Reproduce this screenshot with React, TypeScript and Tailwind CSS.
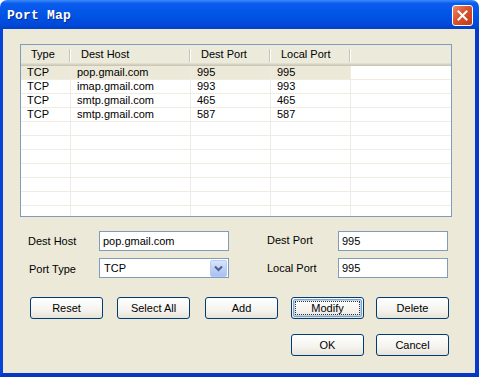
import React from "react";

const rows = [
  ["TCP", "pop.gmail.com", "995", "995"],
  ["TCP", "imap.gmail.com", "993", "993"],
  ["TCP", "smtp.gmail.com", "465", "465"],
  ["TCP", "smtp.gmail.com", "587", "587"],
  ["", "", "", ""],
  ["", "", "", ""],
  ["", "", "", ""],
  ["", "", "", ""],
  ["", "", "", ""],
  ["", "", "", ""],
  ["", "", "", ""],
];

const widths = ["w-[50px]", "w-[120px]", "w-[80px]", "w-[80px]"];

function XpButton({
  label,
  focused,
  className,
}: {
  label: string;
  focused?: boolean;
  className?: string;
}) {
  return (
    <div
      className={
        "flex h-[22px] w-[73px] items-center justify-center rounded-[3px] border border-[#003C74] bg-[linear-gradient(to_bottom,#FFFFFF_0%,#F4F3EE_60%,#E6E3D8_100%)] p-[1px] " +
        (className ?? "")
      }
    >
      <div
        className={
          "flex h-full w-full items-center justify-center rounded-[2px] " +
          (focused
            ? "border border-[#7DA2CE] shadow-[inset_0_0_0_1px_#BCD3F1] outline outline-1 outline-dotted outline-offset-[-3px] outline-[#333]"
            : "")
        }
      >
        <span className="leading-[13px]">{label}</span>
      </div>
    </div>
  );
}

function TextBox({ value, className }: { value: string; className: string }) {
  return (
    <div
      className={
        "flex h-[20px] items-center border border-[#7F9DB9] bg-white pl-[3px] " +
        className
      }
    >
      {value}
    </div>
  );
}

export default function App() {
  return (
    <div
      className="flex h-[377px] w-[479px] flex-col overflow-hidden text-[11px] text-black"
      style={{ fontFamily: '"Liberation Sans", Arial, sans-serif' }}
    >
      {/* title bar */}
      <div className="flex h-[29px] shrink-0 items-center justify-between rounded-t-[7px] bg-[linear-gradient(to_bottom,#3D8BF8_0%,#0A5CEE_12%,#0055E5_50%,#0049DA_85%,#0040C8_100%)] pl-[7px] pr-[6px]">
        <span
          className="pt-[2px] text-[13px] font-bold tracking-[0.2px] text-white [text-shadow:1px_1px_0_#0B2A8C]"
          style={{ fontFamily: '"Liberation Mono", "Courier New", monospace' }}
        >
          Port Map
        </span>
        <div className="mt-[1px] flex h-[21px] w-[21px] items-center justify-center rounded-[3px] border border-white bg-[linear-gradient(135deg,#E8896B_0%,#D9532D_45%,#C13A14_100%)]">
          <svg width="11" height="11" viewBox="0 0 11 11">
            <path
              d="M1.5 1.5 L9.5 9.5 M9.5 1.5 L1.5 9.5"
              stroke="white"
              strokeWidth="2"
              strokeLinecap="square"
            />
          </svg>
        </div>
      </div>

      {/* window body */}
      <div className="flex flex-1 border-x-[3px] border-b-[4px] border-l-[#0842D6] border-r-[4px] border-r-[#0639C9] border-b-[#0536C4]">
        <div className="flex flex-1 flex-col bg-[#ECE9D8]">
          {/* list view */}
          <div className="ml-[17px] mt-[15px] flex h-[173px] w-[432px] flex-col overflow-hidden border border-[#7F9DB9] bg-white">
            <div className="flex h-[21px] shrink-0 bg-[#EBEADB] shadow-[inset_0_-1px_0_#CBC7B8,inset_0_-2px_0_#D6D2C2,inset_0_-3px_0_#E2DECD]">
              {["Type", "Dest Host", "Dest Port", "Local Port"].map((h, i) => (
                <div
                  key={h}
                  className={widths[i] + " relative flex items-center pb-[2px] pl-[10px]"}
                >
                  {h}
                  <div className="absolute right-0 top-[4px] h-[13px] w-[2px] border-l border-r border-l-[#C7C5B2] border-r-white" />
                </div>
              ))}
              <div className="flex-1" />
            </div>
            {rows.map((r, ri) => (
              <div key={ri} className="flex h-[14px] shrink-0">
                {r.map((c, ci) => (
                  <div
                    key={ci}
                    className={
                      widths[ci] +
                      " flex items-center border-b border-r border-[#EFEDE3] pl-[6px] leading-[13px] " +
                      (ri === 0 ? "bg-[#ECE9D8]" : "")
                    }
                  >
                    {c}
                  </div>
                ))}
                <div className="flex-1 border-b border-[#EFEDE3]" />
              </div>
            ))}
          </div>

          {/* form */}
          <div className="mt-[14px] flex h-[20px] items-center pl-[25px]">
            <div className="w-[71px]">Dest Host</div>
            <TextBox value="pop.gmail.com" className="w-[130px]" />
            <div className="ml-[38px] w-[71px] pb-[2px]">Dest Port</div>
            <TextBox value="995" className="w-[110px]" />
          </div>
          <div className="mt-[7px] flex h-[20px] items-center pl-[26px]">
            <div className="w-[70px] pt-[2px]">Port Type</div>
            <div className="flex h-[20px] w-[130px] items-center border border-[#7F9DB9] bg-white pl-[4px] pr-[1px]">
              <span className="flex-1">TCP</span>
              <div className="flex h-[17px] w-[17px] items-center justify-center rounded-[2px] border border-[#B9CBF3] bg-[linear-gradient(to_bottom,#D8E4FC_0%,#B9CDF8_60%,#A9C0F4_100%)]">
                <svg width="9" height="7" viewBox="0 0 9 7">
                  <path
                    d="M1 1.5 L4.5 5 L8 1.5"
                    fill="none"
                    stroke="#4D6185"
                    strokeWidth="2"
                  />
                </svg>
              </div>
            </div>
            <div className="ml-[38px] w-[71px]">Local Port</div>
            <TextBox value="995" className="w-[110px]" />
          </div>

          {/* buttons */}
          <div className="mt-[19px] flex pl-[27px]">
            <XpButton label="Reset" />
            <XpButton label="Select All" className="ml-[14px]" />
            <XpButton label="Add" className="ml-[15px]" />
            <XpButton label="Modify" focused className="ml-[13px]" />
            <XpButton label="Delete" className="ml-[12px]" />
          </div>
          <div className="mt-[15px] flex pl-[288px]">
            <XpButton label="OK" />
            <XpButton label="Cancel" className="ml-[12px]" />
          </div>
        </div>
      </div>
    </div>
  );
}
